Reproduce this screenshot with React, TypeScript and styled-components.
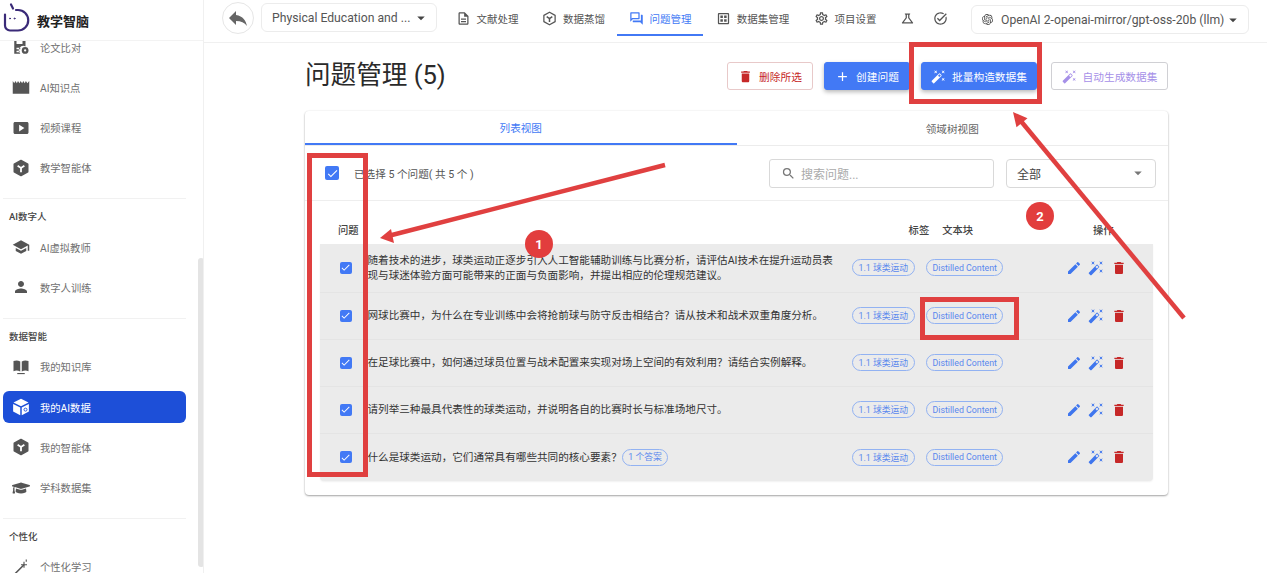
import React from 'react'
import styled, {createGlobalStyle} from 'styled-components'
import {
    MdAdd, MdArrowDropDown, MdAutoFixHigh, MdCheck, MdDelete, MdEdit, MdOutlineDataset,
    MdOutlineDescription, MdOutlineQuestionAnswer, MdOutlineScience, MdOutlineSettings, MdOutlineTaskAlt,
    MdPerson, MdReply, MdSchool, MdSearch, MdSmartDisplay
} from 'react-icons/md'
import {FaGraduationCap} from 'react-icons/fa'
import {SiOpenai} from 'react-icons/si'

const GlobalStyle = createGlobalStyle`
  html, body {
    margin: 0;
    padding: 0;
    background: #fff;
    overflow: hidden;
  }
  body {
    font-family: Roboto, "Noto Sans CJK SC", sans-serif;
    color: #333;
  }
  * { box-sizing: border-box; }
`

const Page = styled.div`
  position: relative;
  display: grid;
  grid-template-columns: 204px 1fr;
  width: 1267px;
  height: 573px;
  overflow: hidden;
`

const Sidebar = styled.aside`
  position: relative;
  display: flex;
  flex-direction: column;
  height: 573px;
  border-right: 1px solid #f0f0f0;
  overflow: hidden;
`

const Brand = styled.div`
  position: relative;
  z-index: 1;
  display: flex;
  align-items: center;
  gap: 4px;
  flex: none;
  height: 41px;
  padding-left: 3px;
  background: #fff;
  border-bottom: 1px solid #f3f3f3;
  font-size: 13px;
  font-weight: 700;
  color: #222;
`

const Nav = styled.nav`
  display: flex;
  flex-direction: column;
  flex: none;
  margin-top: -14px;
  padding-right: 17px;
`

const NavItem = styled.div<{ $active?: boolean }>`
  display: flex;
  align-items: center;
  gap: 10px;
  flex: none;
  height: 32px;
  margin: 4px 0 4.3px 3px;
  padding-left: 9px;
  border-radius: 6px;
  background: ${p => p.$active ? '#1d4fd8' : 'transparent'};
  color: ${p => p.$active ? '#fff' : '#707070'};
  font-size: 10.3px;

  svg {
    flex: none;
    width: 18px;
    height: 18px;
    color: ${p => p.$active ? '#fff' : '#555'};
  }
`

const NavDivider = styled.div`
  flex: none;
  height: 1px;
  margin: 10px 0 8px 3px;
  background: #f1f1f1;
`

const NavLabel = styled.div`
  flex: none;
  height: 20px;
  padding-left: 9px;
  font-size: 9.5px;
  font-weight: 500;
  line-height: 20px;
  color: #444;
`

const ScrollThumb = styled.div`
  position: absolute;
  left: 198px;
  top: 258px;
  width: 6px;
  height: 309px;
  border-radius: 3px;
  background: #e4e4e4;
`

const Main = styled.main`
  display: flex;
  flex-direction: column;
  min-width: 0;
`

const TopBar = styled.header`
  display: flex;
  align-items: flex-start;
  flex: none;
  height: 43px;
  padding: 2px 0 0 18px;
  border-bottom: 1px solid #f0f0f0;
`

const BackButton = styled.div`
  display: flex;
  align-items: center;
  justify-content: center;
  flex: none;
  width: 32px;
  height: 32px;
  margin-right: 7px;
  border: 1px solid #e6e6e6;
  border-radius: 50%;
  color: #666;

  svg { width: 24px; height: 24px; }
`

const TopSelect = styled.div<{ $width: number; $offset: number }>`
  display: flex;
  align-items: center;
  justify-content: space-between;
  flex: none;
  width: ${p => p.$width}px;
  height: 29px;
  margin-top: ${p => p.$offset}px;
  padding: 0 6px 0 10px;
  border: 1px solid #ececec;
  border-radius: 6px;
  font-size: 12.2px;
  color: #555;
  white-space: nowrap;

  svg.caret { width: 18px; height: 18px; color: #444; flex: none; }
`

const ModelName = styled.span`
  display: flex;
  align-items: center;
  gap: 8px;

  svg { width: 11px; height: 11px; color: #444; }
`

const NavTabs = styled.div`
  display: flex;
  margin-left: 7px;
  margin-right: 17px;
`

const NavTab = styled.div<{ $active?: boolean; $width: number }>`
  display: flex;
  align-items: center;
  justify-content: center;
  gap: 6px;
  flex: none;
  width: ${p => p.$width}px;
  height: 34px;
  border-bottom: 2px solid ${p => p.$active ? '#4279f5' : 'transparent'};
  color: ${p => p.$active ? '#4279f5' : '#555'};
  font-size: 10.5px;
  white-space: nowrap;

  svg { flex: none; width: 15px; height: 15px; color: ${p => p.$active ? '#4279f5' : '#555'}; }
`

const Content = styled.div`
  padding: 19px 99px 0 101px;
`

const TitleRow = styled.div`
  display: flex;
  align-items: center;
  justify-content: space-between;
  height: 28px;
  margin-bottom: 21px;
`

const Title = styled.h1`
  margin: 0 0 3px;
  font-size: 25.6px;
  font-weight: 400;
  line-height: 26px;
  color: #2a2a2a;
  white-space: nowrap;
`

const Actions = styled.div`
  display: flex;
  gap: 11px;
`

const ActionButton = styled.div<{ $kind: 'danger' | 'primary' | 'soft'; $width: number }>`
  display: flex;
  align-items: center;
  justify-content: center;
  gap: 6px;
  width: ${p => p.$width}px;
  height: 28px;
  margin-left: ${p => p.$kind === 'soft' ? '3px' : '0'};
  border-radius: 3px;
  font-size: 10.7px;
  white-space: nowrap;
  border: 1px solid ${p => p.$kind === 'danger' ? '#e8c9c9' : p.$kind === 'soft' ? '#d0d0d4' : '#4279f5'};
  background: ${p => p.$kind === 'primary' ? '#4279f5' : '#fff'};
  color: ${p => p.$kind === 'danger' ? '#c62828' : p.$kind === 'soft' ? '#a690e8' : '#fff'};
  box-shadow: ${p => p.$kind === 'primary' ? '0 2px 4px rgba(0,0,0,.28)' : 'none'};

  svg { width: 15px; height: 15px; }
`

const Card = styled.section`
  height: 384px;
  border-radius: 4px;
  box-shadow: 0 1px 2px rgba(0,0,0,.35), 0 0 2px rgba(0,0,0,.08);
`

const Tabs = styled.div`
  display: grid;
  grid-template-columns: 1fr 1fr;
  height: 35px;
  border-bottom: 1px solid #ececec;
`

const Tab = styled.div<{ $active?: boolean }>`
  display: flex;
  align-items: center;
  justify-content: center;
  height: 34px;
  border-bottom: ${p => p.$active ? '2px solid #4279f5' : 'none'};
  color: ${p => p.$active ? '#4279f5' : '#666'};
  font-size: 10.6px;
`

const Toolbar = styled.div`
  display: flex;
  align-items: center;
  height: 55px;
  padding: 0 12px 0 20px;
  border-bottom: 1px solid #eee;
`

const SelectedText = styled.span`
  margin-left: 15px;
  margin-right: auto;
  font-size: 10.6px;
  color: #555;
`

const Box = styled.span<{ $size: number }>`
  display: inline-flex;
  align-items: center;
  justify-content: center;
  flex: none;
  width: ${p => p.$size}px;
  height: ${p => p.$size}px;
  border-radius: 2px;
  background: #4279f5;
  color: #fff;

  svg { width: ${p => p.$size - 1}px; height: ${p => p.$size - 1}px; }
`

const SearchBox = styled.div`
  display: flex;
  align-items: center;
  gap: 5px;
  width: 225px;
  height: 29px;
  padding-left: 11px;
  border: 1px solid #d9d9d9;
  border-radius: 3px;
  font-size: 12px;
  color: #aaa;

  svg { width: 15px; height: 15px; color: #777; }
`

const FilterSelect = styled.div`
  display: flex;
  align-items: center;
  justify-content: space-between;
  width: 150px;
  height: 29px;
  margin-left: 12px;
  padding: 0 8px 0 10px;
  border: 1px solid #d9d9d9;
  border-radius: 4px;
  font-size: 12px;
  color: #444;

  svg { width: 18px; height: 18px; color: #777; }
`

const Table = styled.div`
  margin: 0 15px;
`

const HeadRow = styled.div`
  display: flex;
  align-items: flex-end;
  height: 43px;
  padding: 0 0 7px 18px;
  font-size: 10.3px;
  font-weight: 500;
  color: #444;
  white-space: nowrap;
`

const HeadCell = styled.span<{ $gap?: string }>`
  flex: none;
  margin-left: ${p => p.$gap ?? '0'};
`

const Rows = styled.div`
  border-radius: 0 0 4px 4px;
  background: #ebebeb;
  box-shadow: 0 1px 2px rgba(0,0,0,.06);
`

const Row = styled.div<{ $tall?: boolean }>`
  display: grid;
  grid-template-columns: 47.5px 484.5px 74px 139.5px 1fr;
  align-items: center;
  height: ${p => p.$tall ? '48.5px' : '47px'};
  border-bottom: 1px solid #e4e4e4;

  &:last-child { border-bottom: none; }
`

const CheckCell = styled.div`
  display: flex;
  justify-content: center;
  padding-left: 4px;
`

const Question = styled.div`
  display: flex;
  align-items: center;
  font-size: 10.6px;
  line-height: 15px;
  color: #333;

  span.text { max-width: 470px; }
`

const Chip = styled.span`
  display: inline-flex;
  align-items: center;
  justify-self: start;
  flex: none;
  height: 17px;
  padding: 0 5.5px;
  border: 1px solid #92b2f2;
  border-radius: 9px;
  font-size: 8.8px;
  color: #5a88ee;
  white-space: nowrap;
`

const RowIcons = styled.div`
  display: flex;
  align-items: center;
  gap: 6.5px;

  svg { width: 16px; height: 16px; color: #3f76ee; }
  svg.del { color: #c62828; }
`

const Badge = styled.div<{ $x: number; $y: number }>`
  position: absolute;
  left: ${p => p.$x}px;
  top: ${p => p.$y}px;
  display: flex;
  align-items: center;
  justify-content: center;
  width: 28px;
  height: 28px;
  border-radius: 50%;
  background: #e23d3d;
  color: #fff;
  font-size: 13px;
  font-weight: 700;
`

const Frame = styled.div<{ $x: number; $y: number; $w: number; $h: number }>`
  position: absolute;
  left: ${p => p.$x}px;
  top: ${p => p.$y}px;
  width: ${p => p.$w}px;
  height: ${p => p.$h}px;
  border: 5px solid #e04040;
`

const ArrowLayer = styled.svg`
  position: absolute;
  left: 0;
  top: 0;
  width: 1267px;
  height: 573px;
  pointer-events: none;
`

const HexIcon = ({outline}: { outline?: boolean }) => (
    <svg viewBox="0 0 24 24">
        <path d="M12 2 21 7v10l-9 5-9-5V7z" fill={outline ? 'none' : 'currentColor'} stroke="currentColor" strokeWidth="2" strokeLinejoin="round"/>
        <path d="M7.500 9 12 12l4.500-3M12 12v5.500" fill="none" stroke={outline ? 'currentColor' : '#fff'} strokeWidth="2.400"/>
    </svg>
)

const PaperIcon = () => (
    <svg viewBox="0 0 24 24" fill="currentColor">
        <path d="M3 2h13l2 2v7.200a6 6 0 0 0-6.800 9.800H3zM6 4v4h8V4zM6 13v2h5v-2zM6 17v2h4v-2z"/>
        <circle cx="17.500" cy="16.500" r="4.500"/>
        <circle cx="17.500" cy="16.500" r="1.500" fill="#fff"/>
    </svg>
)

const ClapperIcon = () => (
    <svg viewBox="0 0 24 24" fill="currentColor">
        <path d="M1 4 3 7 4.500 4 6.500 7 8 4 10 7 11.500 4 13.500 7 15 4 17 7 18.500 4 20.500 7 23 4V21H1z"/>
    </svg>
)

const BookIcon = () => (
    <svg viewBox="0 0 24 24" fill="currentColor">
        <path d="M2 4c3-1 6-1 9 .5V18c-3-1.500-6-1.500-9-.5zM13 4.500c3-1.500 6-1.500 9-.5v13.500c-3-1-6-1-9 .5z"/>
        <path d="M7 20h10v1.500H7z"/>
    </svg>
)

const WandIcon = () => (
    <svg viewBox="0 0 24 24" fill="none" stroke="currentColor" strokeWidth="1.500">
        <path d="M2 23 16 9" strokeWidth="2"/>
        <path d="M16 5v8M12 9h8M19 2v3"/>
    </svg>
)

const CubeIcon = () => (
    <svg viewBox="0 0 24 24">
        <path d="M12 1 22 6 12 11 2 6z" fill="currentColor"/>
        <path d="M1.500 8 11 12.800V23L1.500 18z" fill="currentColor"/>
        <path d="M13 12.800 22.500 8v10L13 23z" fill="currentColor"/>
        <circle cx="18" cy="15.500" r="2" fill="none" stroke="#1d4fd8" strokeWidth="1.200"/>
    </svg>
)

const Logo = () => (
    <svg width="30" height="34" viewBox="0 0 30 34" fill="none" stroke="#3a2a78" strokeWidth="2.200" strokeLinecap="round">
        <path d="M13 7h2a10.250 10.250 0 0 1 0 20.500H7a5 5 0 0 1-5-5V11.500"/>
        <path d="M8 1.500 10 5.500"/>
        <circle cx="7" cy="15.500" r=".5" strokeWidth="1"/>
        <circle cx="11.500" cy="15.500" r=".5" strokeWidth="1"/>
    </svg>
)

const questions = [
    '随着技术的进步，球类运动正逐步引入人工智能辅助训练与比赛分析，请评估AI技术在提升运动员表现与球迷体验方面可能带来的正面与负面影响，并提出相应的伦理规范建议。',
    '网球比赛中，为什么在专业训练中会将抢前球与防守反击相结合？请从技术和战术双重角度分析。',
    '在足球比赛中，如何通过球员位置与战术配置来实现对场上空间的有效利用？请结合实例解释。',
    '请列举三种最具代表性的球类运动，并说明各自的比赛时长与标准场地尺寸。',
    '什么是球类运动，它们通常具有哪些共同的核心要素？',
]

export default function App() {
    return <Page>
        <GlobalStyle/>
        <Sidebar>
            <Brand><Logo/>教学智脑</Brand>
            <Nav>
                <NavItem><PaperIcon/>论文比对</NavItem>
                <NavItem><ClapperIcon/>AI知识点</NavItem>
                <NavItem><MdSmartDisplay/>视频课程</NavItem>
                <NavItem><HexIcon/>教学智能体</NavItem>
                <NavDivider/>
                <NavLabel>AI数字人</NavLabel>
                <NavItem><MdSchool/>AI虚拟教师</NavItem>
                <NavItem><MdPerson/>数字人训练</NavItem>
                <NavDivider/>
                <NavLabel>数据智能</NavLabel>
                <NavItem><BookIcon/>我的知识库</NavItem>
                <NavItem $active><CubeIcon/>我的AI数据</NavItem>
                <NavItem><HexIcon/>我的智能体</NavItem>
                <NavItem><FaGraduationCap/>学科数据集</NavItem>
                <NavDivider/>
                <NavLabel>个性化</NavLabel>
                <NavItem><WandIcon/>个性化学习</NavItem>
            </Nav>
            <ScrollThumb/>
        </Sidebar>
        <Main>
            <TopBar>
                <BackButton><MdReply/></BackButton>
                <TopSelect $width={176} $offset={1}>Physical Education and ...<MdArrowDropDown className="caret"/></TopSelect>
                <NavTabs>
                    <NavTab $width={86}><MdOutlineDescription/>文献处理</NavTab>
                    <NavTab $width={87}><HexIcon outline/>数据蒸馏</NavTab>
                    <NavTab $width={86} $active><MdOutlineQuestionAnswer/>问题管理</NavTab>
                    <NavTab $width={99}><MdOutlineDataset/>数据集管理</NavTab>
                    <NavTab $width={86}><MdOutlineSettings/>项目设置</NavTab>
                    <NavTab $width={38}><MdOutlineScience/></NavTab>
                    <NavTab $width={28}><MdOutlineTaskAlt/></NavTab>
                </NavTabs>
                <TopSelect $width={278} $offset={3}>
                    <ModelName><SiOpenai/>OpenAI 2-openai-mirror/gpt-oss-20b (llm)</ModelName>
                    <MdArrowDropDown className="caret"/>
                </TopSelect>
            </TopBar>
            <Content>
                <TitleRow>
                    <Title>问题管理 (5)</Title>
                    <Actions>
                        <ActionButton $kind="danger" $width={86}><MdDelete/>删除所选</ActionButton>
                        <ActionButton $kind="primary" $width={86}><MdAdd/>创建问题</ActionButton>
                        <ActionButton $kind="primary" $width={116}><MdAutoFixHigh/>批量构造数据集</ActionButton>
                        <ActionButton $kind="soft" $width={117}><MdAutoFixHigh/>自动生成数据集</ActionButton>
                    </Actions>
                </TitleRow>
                <Card>
                    <Tabs>
                        <Tab $active>列表视图</Tab>
                        <Tab>领域树视图</Tab>
                    </Tabs>
                    <Toolbar>
                        <Box $size={14}><MdCheck/></Box>
                        <SelectedText>已选择 5 个问题( 共 5 个 )</SelectedText>
                        <SearchBox><MdSearch/>搜索问题...</SearchBox>
                        <FilterSelect>全部<MdArrowDropDown/></FilterSelect>
                    </Toolbar>
                    <Table>
                        <HeadRow>
                            <HeadCell>问题</HeadCell>
                            <HeadCell $gap="550px">标签</HeadCell>
                            <HeadCell $gap="13px">文本块</HeadCell>
                            <HeadCell $gap="120px">操作</HeadCell>
                        </HeadRow>
                        <Rows>
                            {questions.map((q, i) => <Row key={i} $tall={i === 0}>
                                <CheckCell><Box $size={12}><MdCheck/></Box></CheckCell>
                                <Question>
                                    <span className="text">{q}</span>
                                    {i === 4 && <Chip>1 个答案</Chip>}
                                </Question>
                                <Chip>1.1 球类运动</Chip>
                                <Chip>Distilled Content</Chip>
                                <RowIcons>
                                    <MdEdit/>
                                    <MdAutoFixHigh/>
                                    <MdDelete className="del"/>
                                </RowIcons>
                            </Row>)}
                        </Rows>
                    </Table>
                </Card>
            </Content>
        </Main>
        <Frame $x={307} $y={153} $w={61} $h={324}/>
        <Frame $x={909} $y={42} $w={133} $h={62}/>
        <Frame $x={920} $y={297} $w={99} $h={43}/>
        <ArrowLayer viewBox="0 0 1267 573">
            <path d="M665 165 388 236" stroke="#e04040" strokeWidth="4.500" fill="none"/>
            <path d="M380 238 391 229 394 243z" fill="#e04040"/>
            <path d="M1184 318 1020 120" stroke="#e04040" strokeWidth="4.500" fill="none"/>
            <path d="M1013 112 1027.500 118.300 1016.500 127.300z" fill="#e04040"/>
        </ArrowLayer>
        <Badge $x={525} $y={230}>1</Badge>
        <Badge $x={1026} $y={202}>2</Badge>
    </Page>
}
